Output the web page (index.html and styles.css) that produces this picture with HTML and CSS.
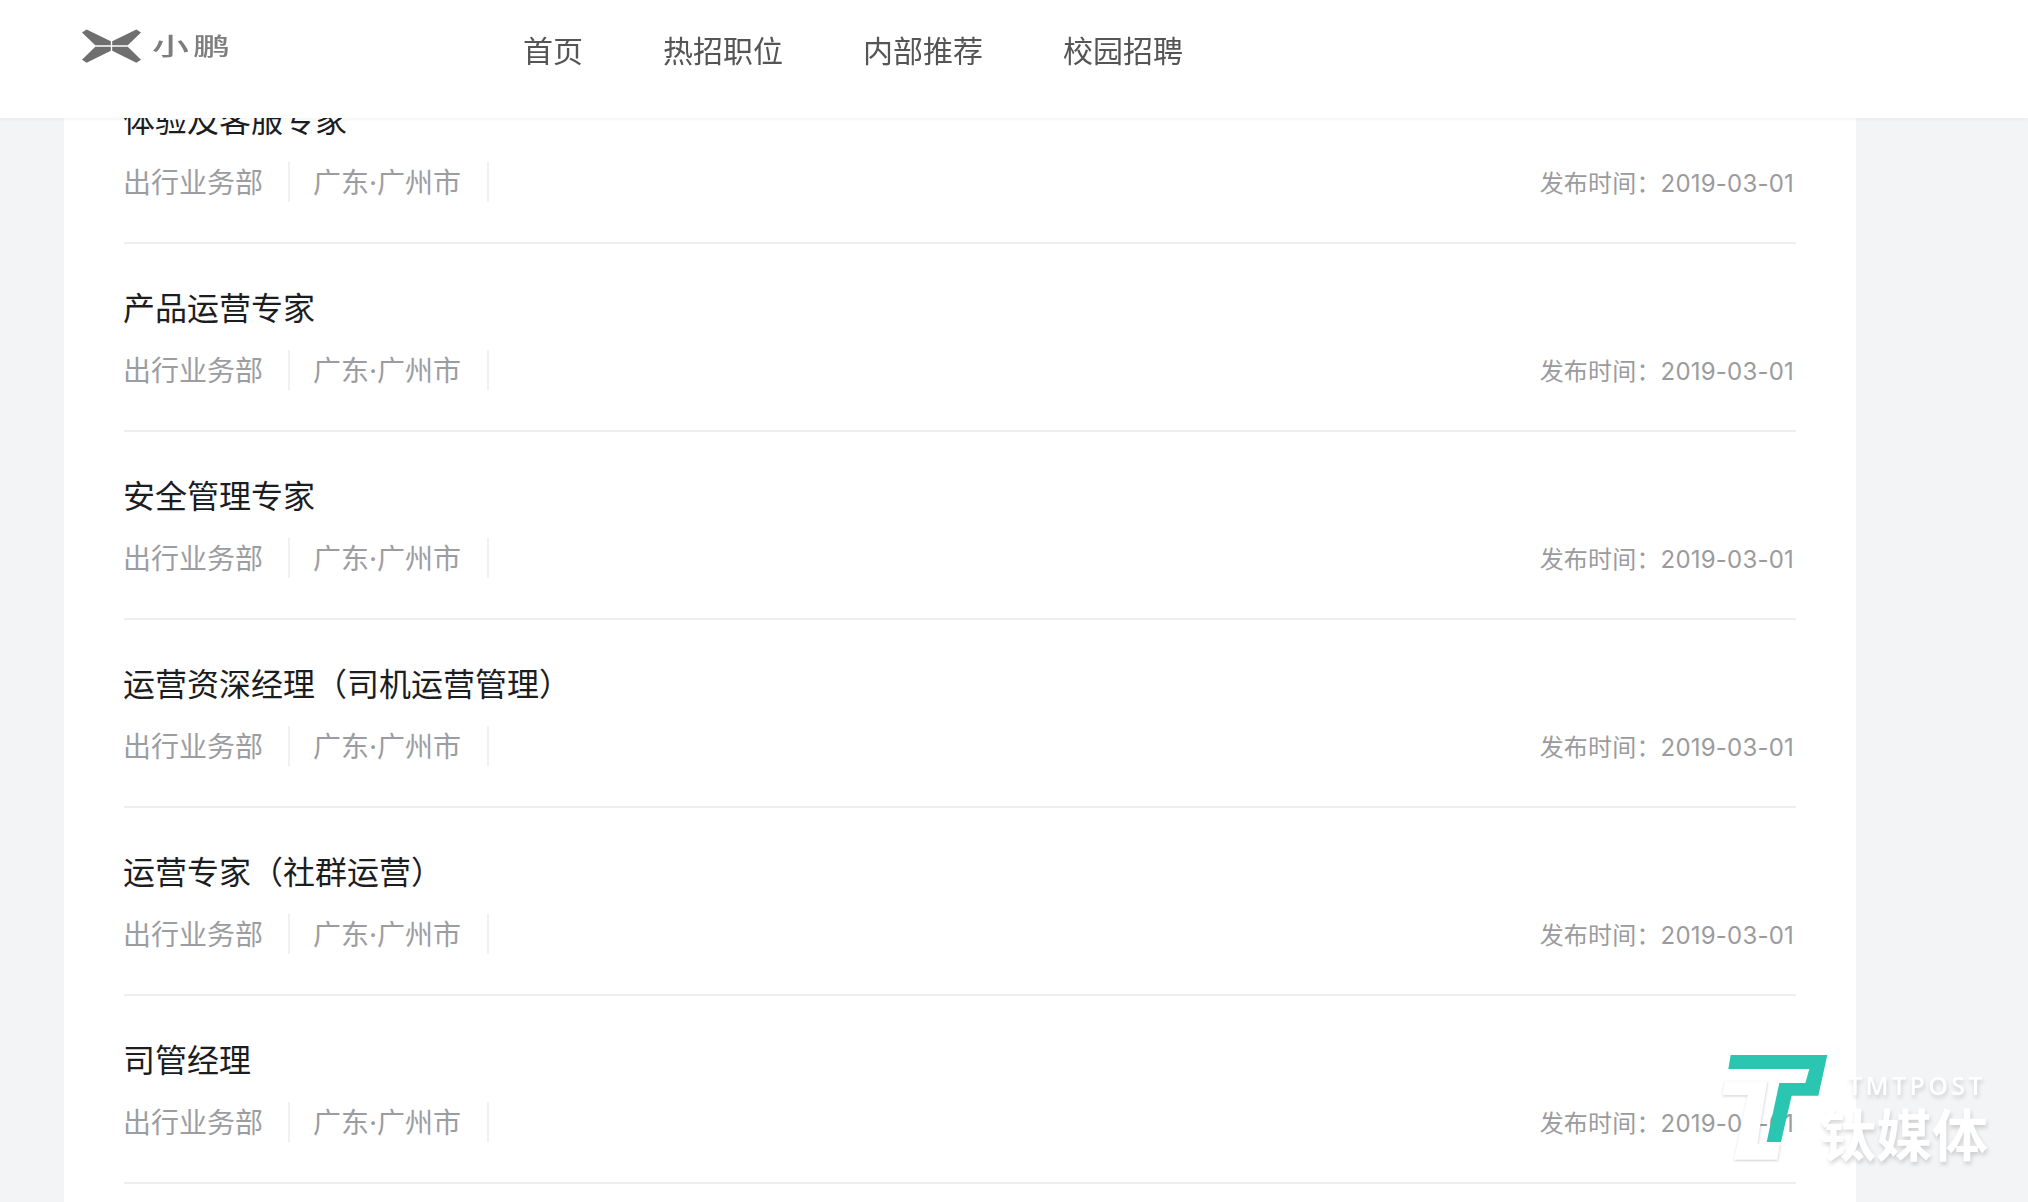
FILE: index.html
```html
<!DOCTYPE html>
<html lang="zh-CN">
<head>
    <meta charset="UTF-8">
    <meta name="viewport" content="width=device-width, initial-scale=1.0">
    <title>小鹏招聘</title>
    <link rel="stylesheet" href="styles.css">
</head>
<body>
    <header class="header">
        <div class="logo">
            <svg class="logo-mark" viewBox="60 55 190 110" aria-hidden="true">
                <polygon points="66,68 80,59 153,94 153,106 106,106"/>
                <polygon points="106,111 153,111 153,123 80,159 66,150"/>
                <polygon points="244,68 230,59 157,94 157,106 204,106"/>
                <polygon points="204,111 157,111 157,123 230,159 244,150"/>
            </svg>
            <span class="logo-text">小鹏</span>
        </div>
        <nav class="nav">
            <a href="#">首页</a>
            <a href="#">热招职位</a>
            <a href="#">内部推荐</a>
            <a href="#">校园招聘</a>
        </nav>
    </header>

    <main class="card">
        <div class="job">
            <h3>体验及客服专家</h3>
            <div class="job-info">
                <div class="tags"><span>出行业务部</span><span>广东·广州市</span></div>
                <div class="date">发布时间：2019-03-01</div>
            </div>
        </div>
        <div class="job">
            <h3>产品运营专家</h3>
            <div class="job-info">
                <div class="tags"><span>出行业务部</span><span>广东·广州市</span></div>
                <div class="date">发布时间：2019-03-01</div>
            </div>
        </div>
        <div class="job">
            <h3>安全管理专家</h3>
            <div class="job-info">
                <div class="tags"><span>出行业务部</span><span>广东·广州市</span></div>
                <div class="date">发布时间：2019-03-01</div>
            </div>
        </div>
        <div class="job">
            <h3>运营资深经理（司机运营管理）</h3>
            <div class="job-info">
                <div class="tags"><span>出行业务部</span><span>广东·广州市</span></div>
                <div class="date">发布时间：2019-03-01</div>
            </div>
        </div>
        <div class="job">
            <h3>运营专家（社群运营）</h3>
            <div class="job-info">
                <div class="tags"><span>出行业务部</span><span>广东·广州市</span></div>
                <div class="date">发布时间：2019-03-01</div>
            </div>
        </div>
        <div class="job">
            <h3>司管经理</h3>
            <div class="job-info">
                <div class="tags"><span>出行业务部</span><span>广东·广州市</span></div>
                <div class="date">发布时间：2019-03-01</div>
            </div>
        </div>
    </main>

    <div class="watermark">
        <svg class="wm-logo" viewBox="120 70 330 330" aria-hidden="true">
            <polygon class="wm-white" points="135,155 262,155 232,342 300,342 292,390 162,390 203,197 127,197"/>
            <polygon class="wm-teal" points="152,76 442,76 415,198 335,198 303,337 260,337 298,160 376,160 388,118 145,118"/>
        </svg>
        <div class="wm-text">
            <div class="wm-en">TMTPOST</div>
            <div class="wm-cn">钛媒体</div>
        </div>
    </div>
</body>
</html>
```

FILE: styles.css
```css
html, body {
    height: 100%;
}

body {
    font-family: Inter, 'Noto Sans CJK SC', sans-serif;
    background-color: #f3f4f6;
    margin: 0;
    padding: 0;
    overflow: hidden;
}

.header {
    position: fixed;
    top: 0;
    left: 0;
    right: 0;
    height: 118px;
    box-sizing: border-box;
    display: flex;
    background-color: #fff;
    box-shadow: 0 1px 4px rgba(0, 0, 0, 0.06);
    z-index: 5;
}

.logo {
    width: 523px;
    box-sizing: border-box;
    padding: 28px 0 0 80px;
    display: flex;
    align-items: flex-start;
    gap: 9px;
    filter: blur(0.7px);
}

.logo-mark {
    width: 63px;
    height: 37px;
    fill: #6f6f6f;
}

.logo-text {
    display: inline-block;
    font-size: 37px;
    font-weight: 500;
    line-height: 37px;
    letter-spacing: 4px;
    color: #7d7d7d;
    transform: scaleY(0.66);
}

.nav {
    display: flex;
    gap: 80px;
    padding-top: 29px;
}

.nav a {
    font-size: 30px;
    line-height: 44px;
    color: #555;
    text-decoration: none;
}

.card {
    width: 1792px;
    box-sizing: border-box;
    margin: 0 0 0 64px;
    padding: 56px 60px 0;
    background-color: #fff;
    height: 100%;
}

.job {
    padding: 43px 0 40px;
    border-bottom: 2px solid #eee;
    height: 188px;
    box-sizing: border-box;
}

.job h3 {
    margin: 0 0 19px -1px;
    font-size: 32px;
    font-weight: 400;
    line-height: 44px;
    color: #1c1d1f;
}

.job-info {
    display: flex;
    justify-content: space-between;
    align-items: center;
}

.tags {
    display: flex;
    margin-left: -1px;
}

.tags span {
    height: 40px;
    font-size: 28px;
    line-height: 42px;
    color: #9c9da1;
    padding-right: 25px;
    margin-right: 23px;
    border-right: 2px solid #f1f1f1;
}

.tags span:last-child {
    padding-right: 26px;
}

.date {
    font-size: 24px;
    letter-spacing: 0.2px;
    color: #9b9b9e;
    padding: 0 2px 1px 0;
}

.watermark {
    position: fixed;
    left: 1720px;
    top: 1053px;
    display: flex;
    z-index: 10;
}

.wm-logo {
    width: 110px;
    height: 110px;
    overflow: visible;
}

.wm-teal {
    fill: #2bc6b1;
}

.wm-white {
    fill: #fff;
    filter: drop-shadow(1px 3px 3px rgba(0, 0, 0, 0.2));
}

.wm-text {
    margin-left: -10px;
    color: #fff;
    text-shadow: 1px 3px 4px rgba(0, 0, 0, 0.16);
}

.wm-en {
    font-family: 'Open Sans', sans-serif;
    font-size: 25px;
    font-weight: 600;
    line-height: 30px;
    letter-spacing: 3.4px;
    margin: 17px 0 0 28px;
}

.wm-cn {
    font-size: 56px;
    line-height: 64px;
    font-weight: 700;
    margin-top: 4px;
}
```
